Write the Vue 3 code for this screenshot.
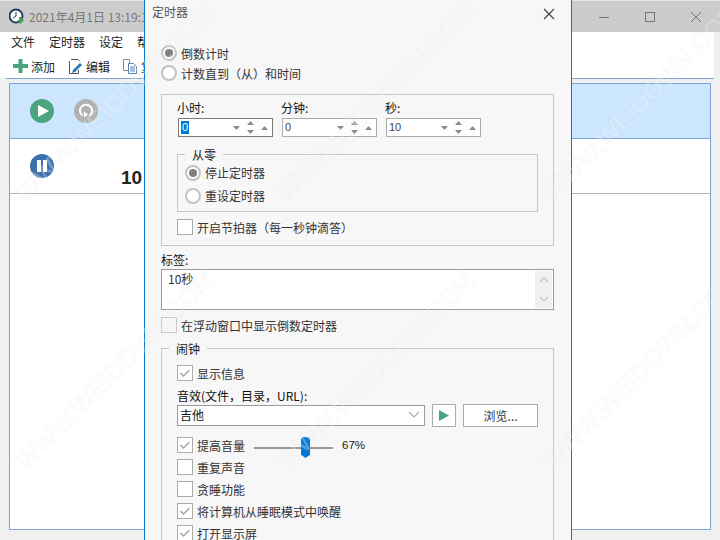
<script setup>
import { ref } from 'vue';

const menus = ref(['文件', '定时器', '设定', '帮助']);

const spinners = ref([
  { label: '小时:', value: '0', focused: true },
  { label: '分钟:', value: '0', focused: false },
  { label: '秒:', value: '10', focused: false }
]);

const alarmRows = ref([
  { label: '重复声音', checked: false },
  { label: '贪睡功能', checked: false },
  { label: '将计算机从睡眠模式中唤醒', checked: true },
  { label: '打开显示屏', checked: true }
]);

// watermark repeats on a grid over the whole shot
const marks = [];
for (const x of [115, 376, 641]) {
  for (const y of [102, 370]) {
    marks.push({ x, y });
  }
}
</script>

<template>
  <div class="screen">
    <!-- main window behind the dialog -->
    <div class="main-window">
      <div class="titlebar">
        <svg class="app-icon" width="18" height="18" viewBox="0 0 18 18">
          <circle cx="7" cy="8" r="6.500" fill="#fff" stroke="#1f3f66" stroke-width="2" />
          <path d="M7 4v4l-3 2" fill="none" stroke="#333" stroke-width="1" />
          <path d="M10 9h3v3h2l-3.500 4-3.500-4h2z" fill="#3fa34d" />
        </svg>
        <span class="app-title">2021年4月1日 13:19:18</span>
        <div class="win-btns">
          <svg width="12" height="12" viewBox="0 0 12 12"><path d="M1 6.500h10" stroke="#777" fill="none" /></svg>
          <svg width="12" height="12" viewBox="0 0 12 12"><rect x="1.500" y="1.500" width="9" height="9" stroke="#777" fill="none" /></svg>
          <svg width="12" height="12" viewBox="0 0 12 12"><path d="M1 1l10 10M11 1L1 11" stroke="#777" fill="none" /></svg>
        </div>
      </div>
      <div class="menubar">
        <span v-for="m in menus" :key="m">{{ m }}</span>
      </div>
      <div class="toolbar">
        <div class="tool">
          <svg width="15" height="14" viewBox="0 0 15 14"><path d="M5.500 0h4v5H15v4H9.500v5h-4V9H0V5h5.500z" fill="#4aa57f" /></svg>
          <span>添加</span>
        </div>
        <div class="tool">
          <svg width="16" height="17" viewBox="0 0 16 17">
            <path d="M4 1.500h7l2 2M2.500 3v12.500h9V12" fill="none" stroke="#555" />
            <path d="M13 5l2 2-7 7-3 1 1-3z" fill="#2f74b5" />
          </svg>
          <span>编辑</span>
        </div>
        <div class="tool">
          <svg width="16" height="17" viewBox="0 0 16 17">
            <path d="M1.500 1.500h6v11h-6z" fill="#fff" stroke="#888" />
            <path d="M6.500 5.500h5l3 3v7h-8z" fill="#fff" stroke="#5b82ad" />
            <path d="M8 9h5M8 11h5M8 13h5" stroke="#5b82ad" />
          </svg>
          <span>复制</span>
        </div>
      </div>
      <div class="toolbar-line"></div>
      <div class="list-wrap">
        <div class="list">
          <div class="row row-selected">
            <svg class="round" width="24" height="24" viewBox="0 0 24 24">
              <circle cx="12" cy="12" r="12" fill="#4aa57f" />
              <path d="M8 6l11 6-11 6z" fill="#fff" />
            </svg>
            <svg class="round" width="24" height="24" viewBox="0 0 24 24">
              <circle cx="12" cy="12" r="12" fill="#b2b2b2" />
              <path d="M8.500 16.500a6 6 0 1 1 7 0" fill="none" stroke="#fff" stroke-width="2" />
              <path d="M10 12.500l4 3-4 3z" fill="#fff" />
            </svg>
          </div>
          <div class="row row-timer">
            <svg class="round" width="24" height="24" viewBox="0 0 24 24">
              <circle cx="12" cy="12" r="12" fill="#3b72ae" />
              <path d="M7 6h4v12H7zM13 6h4v12h-4z" fill="#fff" />
            </svg>
            <span class="timer-text">10 秒</span>
          </div>
        </div>
      </div>
    </div>

    <!-- timer dialog -->
    <div class="dialog">
      <div class="dialog-title">
        <span>定时器</span>
        <svg width="12" height="12" viewBox="0 0 12 12"><path d="M1 1l10 10M11 1L1 11" stroke="#444" stroke-width="1.200" fill="none" /></svg>
      </div>

      <div class="mode">
        <label class="opt"><i class="radio on"></i>倒数计时</label>
        <label class="opt"><i class="radio"></i>计数直到（从）和时间</label>
      </div>

      <div class="group time-group">
        <div class="spinners">
          <div v-for="s in spinners" :key="s.label" class="spinner">
            <div class="spin-label">{{ s.label }}</div>
            <div class="spin-box" :class="{ focused: s.focused }">
              <span class="spin-val" :class="{ sel: s.focused }">{{ s.value }}</span>
              <svg width="46" height="17" viewBox="0 0 46 17">
                <path d="M7 7h7l-3.500 4z M21 6l3.500-4 3.500 4z M21 11h7l-3.500 4z M35 11l3.500-4 3.500 4z" fill="#8a8a8a" />
              </svg>
            </div>
          </div>
        </div>
        <div class="group zero-group">
          <span class="legend">从零</span>
          <label class="opt"><i class="radio on"></i>停止定时器</label>
          <label class="opt"><i class="radio"></i>重设定时器</label>
        </div>
        <label class="check-row metronome"><i class="check"></i>开启节拍器（每一秒钟滴答）</label>
      </div>

      <div class="tag-label">标签:</div>
      <div class="tag-box">
        <span>10秒</span>
        <div class="tag-scroll">
          <svg width="10" height="6" viewBox="0 0 10 6"><path d="M1 5l4-4 4 4" fill="none" stroke="#c4c4c4" stroke-width="1.200" /></svg>
          <svg width="10" height="6" viewBox="0 0 10 6"><path d="M1 1l4 4 4-4" fill="none" stroke="#c4c4c4" stroke-width="1.200" /></svg>
        </div>
      </div>

      <label class="check-row float-row"><i class="check pale"></i>在浮动窗口中显示倒数定时器</label>

      <div class="group alarm-group">
        <span class="legend">闹钟</span>
        <label class="check-row show-info"><i class="check"><svg width="14" height="14" viewBox="0 0 14 14"><path d="M2.500 7l3 3 6-6" fill="none" stroke="#a8a8a8" stroke-width="1.500" /></svg></i>显示信息</label>
        <div class="sound-label">音效(文件，目录，URL):</div>
        <div class="sound-row">
          <div class="combo">
            <span>吉他</span>
            <svg width="12" height="7" viewBox="0 0 12 7"><path d="M1 1l5 5 5-5" fill="none" stroke="#aaa" stroke-width="1.200" /></svg>
          </div>
          <div class="btn play">
            <svg width="10" height="11" viewBox="0 0 10 11"><path d="M0 0l10 5.500L0 11z" fill="#4aa57f" /></svg>
          </div>
          <div class="btn browse">浏览...</div>
        </div>
        <div class="volume-row">
          <label class="check-row"><i class="check"><svg width="14" height="14" viewBox="0 0 14 14"><path d="M2.500 7l3 3 6-6" fill="none" stroke="#a8a8a8" stroke-width="1.500" /></svg></i>提高音量</label>
          <div class="slider"><div class="thumb"></div></div>
          <span class="percent">67%</span>
        </div>
        <label v-for="r in alarmRows" :key="r.label" class="check-row alarm-row">
          <i class="check"><svg v-if="r.checked" width="14" height="14" viewBox="0 0 14 14"><path d="M2.500 7l3 3 6-6" fill="none" stroke="#a8a8a8" stroke-width="1.500" /></svg></i>{{ r.label }}
        </label>
      </div>
    </div>

    <!-- site watermark over everything -->
    <div class="watermark">
      <span v-for="(m, i) in marks" :key="i" class="mark" :style="{ left: m.x + 'px', top: m.y + 'px' }">WWW.WEIDOWN.COM</span>
    </div>
  </div>
</template>

<style>
html, body {
  margin: 0;
  background: #f0f0f0;
}
</style>

<style scoped>
.screen {
  position: relative;
  width: 720px;
  height: 540px;
  overflow: hidden;
  font-family: "Noto Sans CJK SC", "Liberation Sans", sans-serif;
  font-size: 12px;
  color: #222;
  background: #f0f0f0;
}

/* main window */
.main-window {
  display: flex;
  flex-direction: column;
  height: 540px;
}
.titlebar {
  display: flex;
  align-items: center;
  height: 32px;
  flex: none;
  box-sizing: border-box;
  padding-left: 9px;
  background: #cccccc;
  border-top: 1px solid #e4e4e4;
}
.app-title {
  margin-left: 2px;
  color: #777;
  white-space: nowrap;
}
.win-btns {
  display: flex;
  gap: 34px;
  margin-left: auto;
  margin-right: 18px;
}
.menubar {
  display: flex;
  gap: 14px;
  box-sizing: border-box;
  height: 23px;
  flex: none;
  align-items: center;
  padding: 0 0 4px 11px;
  margin-right: 6px;
  background: #fff;
}
.toolbar {
  display: flex;
  gap: 12px;
  box-sizing: border-box;
  height: 23px;
  flex: none;
  align-items: center;
  padding: 0 0 1px 13px;
  margin-right: 6px;
  background: #fff;
}
.toolbar-line {
  height: 1px;
  flex: none;
  margin: 0 6px;
  background: #7aa7d6;
}
.tool {
  display: flex;
  align-items: center;
  gap: 3px;
}
.list-wrap {
  flex: 1;
  min-height: 0;
  padding: 4px 9px 10px 9px;
}
.list {
  height: 100%;
  box-sizing: border-box;
  background: #fff;
  border: 1px solid #7aa7d6;
}
.row {
  display: flex;
  align-items: center;
  box-sizing: border-box;
  height: 55px;
  padding-left: 20px;
}
.row-selected {
  gap: 20px;
  background: #cce6ff;
  border-bottom: 1px solid #7aa7d6;
}
.row-timer {
  border-bottom: 1px solid #b4b4b4;
}
.timer-text {
  margin-left: 67px;
  margin-top: 18px;
  font-family: "Liberation Sans", "Noto Sans CJK SC", sans-serif;
  font-size: 19px;
  font-weight: bold;
  color: #222;
  white-space: nowrap;
}

/* dialog */
.dialog {
  position: absolute;
  left: 144px;
  top: 0;
  width: 428px;
  height: 540px;
  box-sizing: border-box;
  padding: 0 17px 0 16px;
  background: #f7f7f7;
  border-left: 1px solid #0078d7;
  border-right: 1px solid #0078d7;
}
.dialog-title {
  display: flex;
  justify-content: space-between;
  align-items: center;
  height: 26px;
  margin-left: -9px;
  margin-right: -1px;
  color: #555;
}
.dialog-title span {
  margin-top: -3px;
}
.dialog-title svg {
  margin-top: 2px;
}
.mode {
  margin-top: 17px;
}
.opt {
  display: flex;
  align-items: center;
  height: 20px;
  color: #333;
}
.radio {
  display: flex;
  align-items: center;
  justify-content: center;
  width: 16px;
  height: 16px;
  margin-right: 4px;
  box-sizing: border-box;
  border: 2px solid #c2c2c2;
  border-radius: 50%;
  background: #fff;
  flex: none;
}
.radio.on::after {
  content: "";
  width: 8px;
  height: 8px;
  border-radius: 50%;
  background: #808080;
}
.group {
  position: relative;
  box-sizing: border-box;
  border: 1px solid #c8c8c8;
}
.legend {
  position: absolute;
  top: -9px;
  left: 7px;
  padding: 0 7px;
  line-height: 18px;
  background: #f7f7f7;
  color: #222;
}
.time-group {
  height: 152px;
  margin-top: 11px;
  padding: 6px 15px 0;
}
.spinners {
  display: flex;
  gap: 9px;
}
.spin-label {
  height: 17px;
  line-height: 14px;
  color: #111;
}
.spin-box {
  display: flex;
  align-items: center;
  justify-content: space-between;
  box-sizing: border-box;
  width: 95px;
  height: 19px;
  margin-left: 1px;
  margin-right: -1px;
  padding: 0 0 0 2px;
  background: #fff;
  border: 1px solid #ababab;
}
.spin-box.focused {
  border-color: #7a7a7a;
}
.spin-val {
  color: #444;
  font-family: "Liberation Sans", sans-serif;
  font-size: 11px;
  line-height: 13px;
}
.spin-val.sel {
  background: #0078d7;
  color: #fff;
  padding: 0 1px;
}
.zero-group {
  width: 361px;
  height: 58px;
  margin-top: 17px;
  padding-top: 6px;
  padding-left: 7px;
}
.zero-group .opt {
  height: 23px;
}
.check-row {
  display: flex;
  align-items: center;
  height: 16px;
  color: #333;
  white-space: nowrap;
}
.check {
  display: flex;
  align-items: center;
  justify-content: center;
  box-sizing: border-box;
  width: 16px;
  height: 16px;
  margin-right: 4px;
  background: #fff;
  border: 1px solid #ababab;
  flex: none;
}
.check.pale {
  background: #f7f7f7;
  border-color: #c8c8c8;
}
.metronome {
  margin-top: 7px;
}
.tag-label {
  height: 23px;
  line-height: 27px;
  color: #111;
}
.tag-box {
  display: flex;
  justify-content: space-between;
  box-sizing: border-box;
  height: 41px;
  padding: 1px 1px 1px 6px;
  background: #fff;
  border: 1px solid #9a9a9a;
  color: #333;
  line-height: 16px;
}
.tag-scroll {
  display: flex;
  flex-direction: column;
  align-items: center;
  justify-content: space-around;
  width: 17px;
  background: #f0f0f0;
}
.float-row {
  margin-top: 7px;
}
.alarm-group {
  height: 220px;
  margin-top: 15px;
  padding: 16px 15px 0;
}
.sound-label {
  height: 24px;
  line-height: 30px;
  color: #111;
}
.sound-row {
  display: flex;
  align-items: flex-start;
}
.combo {
  display: flex;
  align-items: center;
  justify-content: space-between;
  box-sizing: border-box;
  width: 249px;
  height: 21px;
  padding: 0 4px 2px 2px;
  background: #fff;
  border: 1px solid #9a9a9a;
  color: #111;
}
.btn {
  display: flex;
  align-items: center;
  justify-content: center;
  box-sizing: border-box;
  height: 23px;
  margin-top: -1px;
  background: #fff;
  border: 1px solid #ababab;
  color: #333;
}
.play {
  width: 24px;
  margin-left: 7px;
}
.browse {
  width: 75px;
  margin-left: 7px;
}
.volume-row {
  display: flex;
  align-items: center;
  height: 22px;
  margin-top: 7px;
}
.slider {
  position: relative;
  width: 79px;
  height: 2px;
  margin-left: 9px;
  margin-top: 6px;
  background: #999;
}
.thumb {
  position: absolute;
  left: 47px;
  top: -10px;
  width: 9px;
  height: 21px;
  background: #0078d7;
  clip-path: polygon(0 2px, 2px 0, 7px 0, 100% 2px, 100% 85%, 50% 100%, 0 85%);
}
.percent {
  margin-left: 9px;
  font-family: "Liberation Sans", sans-serif;
  font-size: 11.500px;
  color: #222;
}
.alarm-row {
  margin-top: 6px;
}
.volume-row + .alarm-row {
  margin-top: 3px;
}

/* watermark */
.watermark {
  position: absolute;
  inset: 0;
  pointer-events: none;
}
.mark {
  position: absolute;
  transform: translate(-50%, -50%) rotate(-45deg);
  font-family: "Liberation Sans", sans-serif;
  font-size: 25px;
  white-space: nowrap;
  color: rgba(255, 255, 255, 0.3);
  -webkit-text-stroke: 1px rgba(205, 205, 205, 0.14);
}
</style>
